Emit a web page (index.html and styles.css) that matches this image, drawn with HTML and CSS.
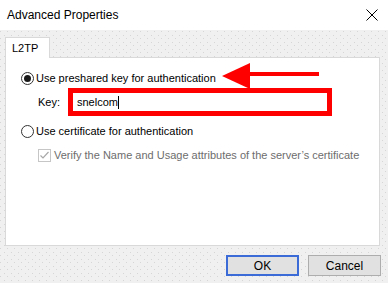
FILE: index.html
```html
<!DOCTYPE html>
<html lang="en">
<head>
    <meta charset="UTF-8">
    <title>Advanced Properties</title>
    <link rel="stylesheet" href="styles.css">
</head>
<body>
    <div class="window">
        <!-- Titulek okna -->
        <div class="titlebar">
            <span class="title">Advanced Properties</span>
            <svg class="close" width="12" height="12" viewBox="0 0 12 12">
                <path d="M0.5 0.5 L11.5 11.5 M11.5 0.5 L0.5 11.5" stroke="#000" stroke-width="1"/>
            </svg>
        </div>

        <div class="content">
            <div class="tabs">
                <div class="tab">L2TP</div>
            </div>
            <div class="panel">
                <div class="option">
                    <span class="radio checked"></span>
                    <span>Use preshared key for authentication</span>
                </div>
                <div class="key-row">
                    <span class="key-label">Key:</span>
                    <div class="key-input"><span>snelcom</span><span class="caret"></span></div>
                </div>
                <div class="option second">
                    <span class="radio"></span>
                    <span>Use certificate for authentication</span>
                </div>
                <div class="check-row">
                    <span class="checkbox">
                        <svg width="11" height="11" viewBox="0 0 11 11">
                            <path d="M1.5 5.5 L4 8 L9.5 2" fill="none" stroke="#a8a8a8" stroke-width="1.2"/>
                        </svg>
                    </span>
                    <span>Verify the Name and Usage attributes of the server’s certificate</span>
                </div>

                <!-- Šipka (anotace) -->
                <svg class="arrow" width="98" height="28" viewBox="0 0 98 28">
                    <polygon points="0,15 28,2 28,28" fill="#ff0000"/>
                    <rect x="27" y="11" width="70" height="4" fill="#ff0000"/>
                </svg>
            </div>
            <div class="buttons">
                <button class="btn default">OK</button>
                <button class="btn">Cancel</button>
            </div>
        </div>
    </div>
</body>
</html>
```

FILE: styles.css
```css
* {
    box-sizing: border-box;
}
body {
    margin: 0;
    font-family: 'Liberation Sans', Arial, sans-serif;
    font-size: 11px;
    color: #000;
    background: #f0f0f0;
    white-space: nowrap;
}
.window {
    width: 388px;
    height: 283px;
    display: flex;
    flex-direction: column;
    overflow: hidden;
}
.titlebar {
    height: 30px;
    background: #fff;
    display: flex;
    align-items: center;
    justify-content: space-between;
    padding: 0 10px 0 7px;
    flex-shrink: 0;
}
.title {
    font-size: 12px;
}
.close {
    display: block;
}
.content {
    flex: 1;
    background-color: #f0f0f0;
    background-image:
        radial-gradient(circle, #d6d6d6 0.6px, transparent 0.9px),
        radial-gradient(circle, #d6d6d6 0.6px, transparent 0.9px);
    background-size: 7px 7px, 7px 7px;
    background-position: 1px 2px, 4px 5px;
    padding: 7px 8px 0 5px;
    display: flex;
    flex-direction: column;
}
.tabs {
    display: flex;
    height: 21px;
    position: relative;
    z-index: 1;
}
.tab {
    width: 45px;
    height: 21px;
    background: #fff;
    border: 1px solid #d9d9d9;
    border-bottom: none;
    padding-left: 6px;
    line-height: 20px;
    font-size: 11px;
}
.panel {
    position: relative;
    margin-top: -1px;
    height: 189px;
    background: #fff;
    border: 1px solid #d9d9d9;
    padding: 12px 0 0 15px;
}
.option {
    display: flex;
    align-items: center;
    height: 16px;
    gap: 2px;
}
.option.second {
    margin-top: 7px;
}
.radio {
    width: 13px;
    height: 13px;
    border: 1px solid #333;
    border-radius: 50%;
    position: relative;
    background: #fff;
}
.radio.checked::after {
    content: '';
    position: absolute;
    left: 2px;
    top: 2px;
    width: 7px;
    height: 7px;
    border-radius: 50%;
    background: #1a1a1a;
}
.key-row {
    display: flex;
    align-items: center;
    margin-top: 2px;
    padding-left: 17px;
}
.key-label {
    width: 30px;
}
.key-input {
    width: 264px;
    height: 28px;
    border: 5px solid #ff0000;
    background: #fff;
    display: flex;
    align-items: center;
    padding-left: 4px;
}
.caret {
    width: 1px;
    height: 13px;
    background: #000;
}
.check-row {
    display: flex;
    align-items: center;
    height: 16px;
    margin-top: 8px;
    padding-left: 17px;
    gap: 3px;
    color: #6d6d6d;
}
.checkbox {
    width: 13px;
    height: 13px;
    border: 1px solid #c6c6c6;
    background: #fff;
    display: flex;
    align-items: center;
    justify-content: center;
}
.arrow {
    position: absolute;
    left: 216px;
    top: 3px;
}
.buttons {
    display: flex;
    justify-content: flex-end;
    gap: 9px;
    margin-top: 9px;
    margin-right: -1px;
}
.btn {
    width: 73px;
    height: 21px;
    background: #e1e1e1;
    border: 1px solid #adadad;
    font-family: 'Liberation Sans', Arial, sans-serif;
    font-size: 12px;
    color: #000;
    padding: 0;
}
.btn.default {
    border: 2px solid #3a6bd6;
}
```
